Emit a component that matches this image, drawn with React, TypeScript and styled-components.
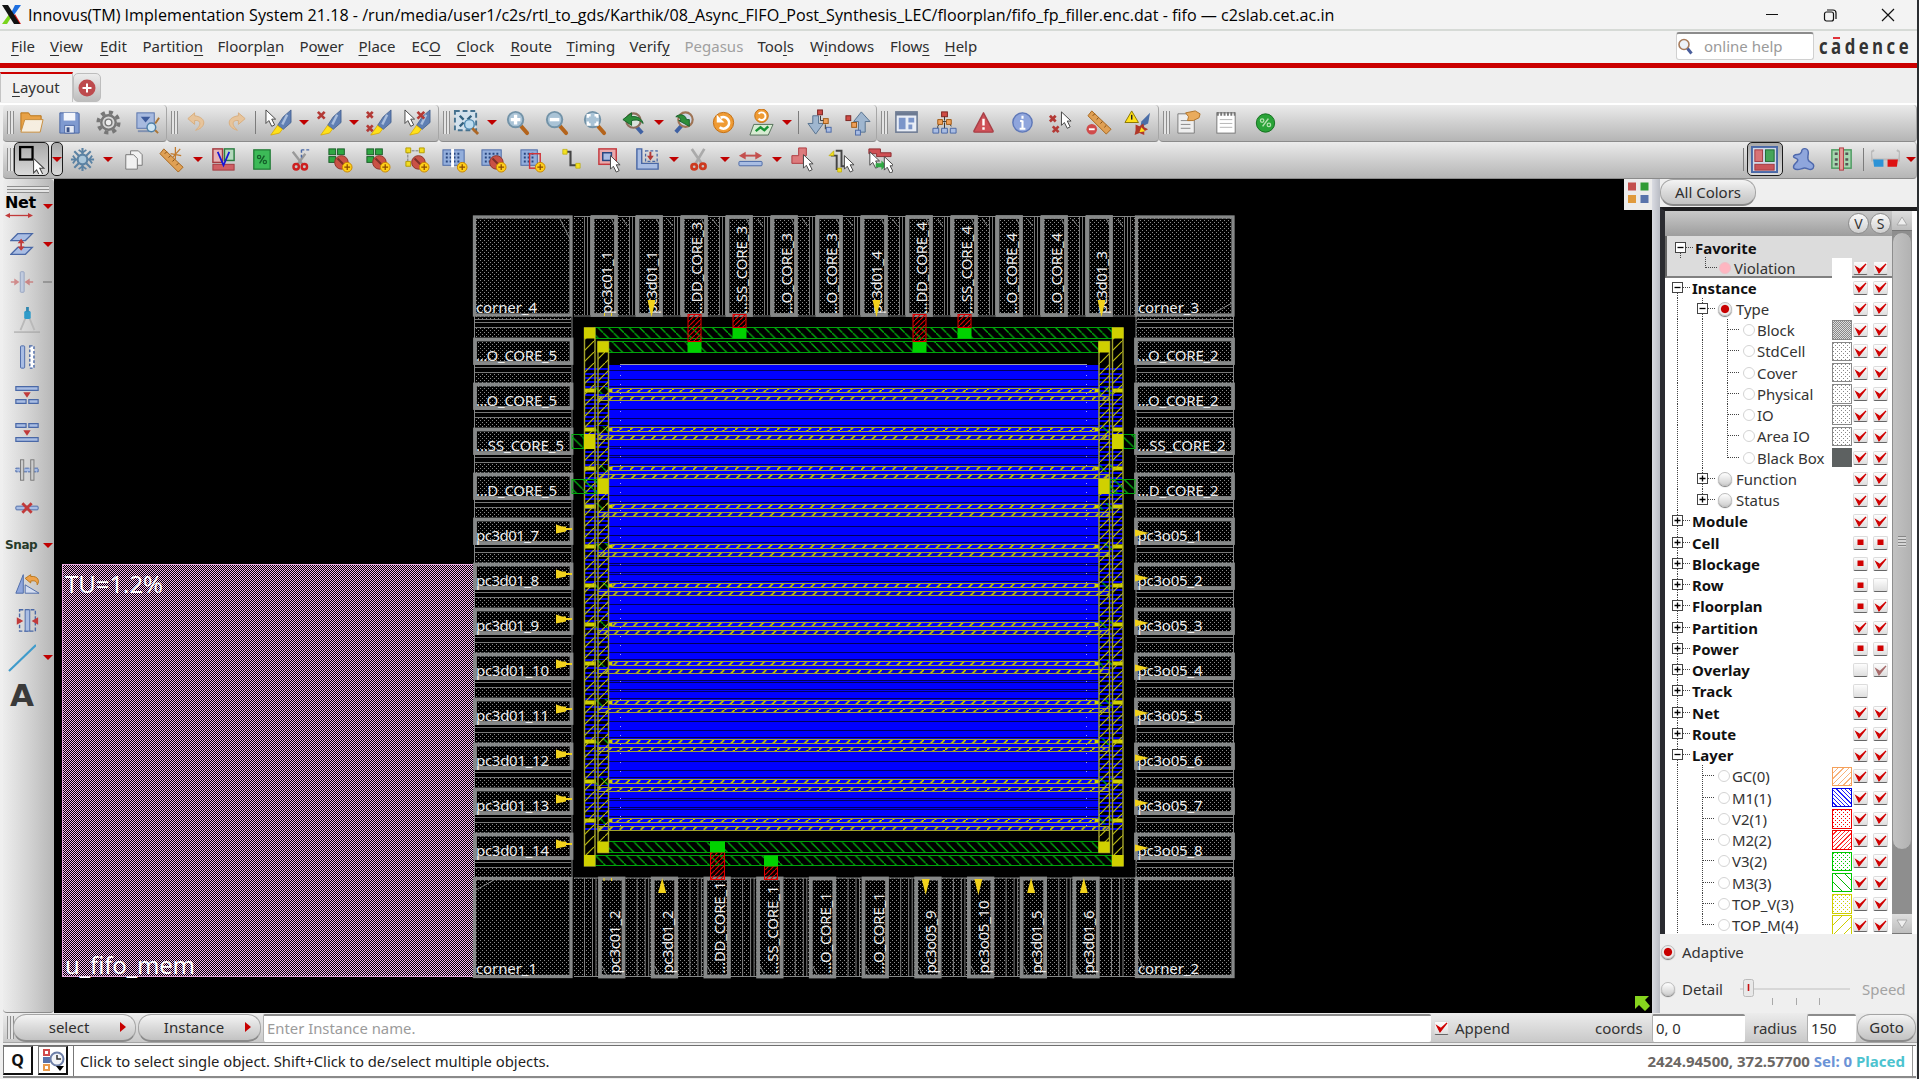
import React from "react";
import styled, { createGlobalStyle, css } from "styled-components";

const Global = createGlobalStyle`
  * { box-sizing: border-box; }
  html, body { margin: 0; padding: 0; background: #efefef; overflow: hidden; }
  body { font-family: "Noto Sans", "Open Sans", sans-serif; font-size: 15px; color: #333; }
  svg { display: block; }
`;

/* ---------- frame ---------- */

const Window = styled.div`
  width: 1919px;
  height: 1079px;
  display: flex;
  flex-direction: column;
  background: #efefef;
  border-right: 2px solid #2b2e31;
  overflow: hidden;
  white-space: nowrap;
`;

const TitleBar = styled.header`
  height: 31px;
  flex: none;
  display: flex;
  align-items: center;
  padding: 0 22px 0 2px;
  background: #f3f3f3;
  border-bottom: 2px solid #d6dad6;
`;

const TitleText = styled.div`
  margin-left: 7px;
  font: 16.12px "Open Sans", "Noto Sans", sans-serif;
  color: #000;
  flex: 1;
`;

const WindowControls = styled.div`
  display: flex;
  gap: 44px;
`;

const MenuBar = styled.nav`
  height: 32px;
  flex: none;
  display: flex;
  align-items: center;
  padding: 0 0 3px 11px;
  background: #f3f3f3;
`;

const MenuItem = styled.div<{ $w: number; $off?: boolean }>`
  width: ${(p) => p.$w}px;
  font-size: 15px;
  color: ${(p) => (p.$off ? "#a0a0a0" : "#2e2e2e")};
  u { text-underline-offset: 3px; text-decoration-thickness: 1.3px; }
`;

const HelpBox = styled.div`
  margin-left: auto;
  width: 138px;
  height: 28px;
  display: flex;
  align-items: center;
  gap: 11px;
  background: #fff;
  border: 1px solid #d0d0d0;
  border-top: 2px solid #8c8c8c;
  border-radius: 3px;
  color: #9a9a9a;
  font-size: 15px;
`;

const Logo = styled.div`
  width: 103px;
  padding-left: 5px;
`;

const RedRule = styled.div`
  height: 5px;
  flex: none;
  background: #cb0000;
`;

const TabRow = styled.div`
  height: 37px;
  flex: none;
  display: flex;
  align-items: flex-end;
  padding-bottom: 1px;
  border-bottom: 2px solid #fff;
`;

const Tab = styled.div`
  width: 73px;
  height: 30px;
  border-top: 2px solid #cb0000;
  border-right: 1px solid #c4c4c4;
  border-left: 1px solid #c4c4c4;
  background: #f1f1f1;
  padding: 3px 0 0 11px;
  font-size: 15px;
  u { text-underline-offset: 3px; }
`;

const AddTab = styled.div`
  width: 28px;
  height: 29px;
  display: flex;
  align-items: center;
  justify-content: center;
  border: 1px solid #bdbdbd;
  border-radius: 5px;
  background: linear-gradient(#ececec, #bdbdbd);
`;

/* ---------- toolbars ---------- */

const ToolBar = styled.div`
  height: 37px;
  flex: none;
  display: flex;
  padding-left: 3px;
`;

const ToolGroup = styled.div<{ $w?: number }>`
  ${(p) => (p.$w ? css`width: ${p.$w}px; flex: none;` : css`flex: 1;`)}
  display: flex;
  align-items: center;
  padding: 0 0 2px 4px;
  border-radius: 4px;
  background: linear-gradient(#ebebeb, #d2d2d2 45%, #b5b5b5);
  border-bottom: 1px solid #8b8b8b;
  border-right: 1px solid #a6a6a6;
`;

const Grip = styled.div<{ $gap?: number }>`
  width: 7px;
  height: 23px;
  flex: none;
  margin-right: ${(p) => p.$gap ?? 0}px;
  background: repeating-linear-gradient(90deg, #8e8e8e 0 1px, #e4e4e4 1px 3px);
`;

const SideGrip = styled.div`
  width: 42px;
  height: 7px;
  margin: 7px 0 -5px 4px;
  background: repeating-linear-gradient(#8e8e8e 0 1px, #e4e4e4 1px 3px);
`;

const Slot = styled.div<{ $w: number }>`
  width: ${(p) => p.$w}px;
  flex: none;
  display: flex;
  align-items: center;
  justify-content: center;
`;

const Divider = styled.div<{ $l?: number; $r?: number }>`
  width: 1px;
  height: 23px;
  flex: none;
  background: #7c7c7c;
  margin: 0 ${(p) => p.$r ?? 3}px 0 ${(p) => p.$l ?? 0}px;
`;

const Pressed = styled.div<{ $w: number; $gap?: number }>`
  width: ${(p) => p.$w}px;
  height: 34px;
  flex: none;
  display: flex;
  align-items: center;
  justify-content: center;
  border: 1.5px solid #1c1c1c;
  border-radius: 5px;
  background: linear-gradient(#a9a9a9, #dadada);
  margin-right: ${(p) => p.$gap ?? 2}px;
`;

const Push = styled.div`
  margin-left: auto;
  display: flex;
  align-items: center;
`;

const Down = styled.div`
  width: 0;
  height: 0;
  border: 5px solid transparent;
  border-top: 5.5px solid #c00000;
  border-bottom: 0;
`;

const RightTri = styled.div`
  width: 0;
  height: 0;
  margin-right: 5px;
  border: 5px solid transparent;
  border-left: 6px solid #c80000;
  border-right: 0;
`;

const Body = styled.div`
  height: 834px;
  flex: none;
  display: flex;
`;

const SideBar = styled.div`
  width: 51px;
  margin-left: 3px;
  flex: none;
  background: linear-gradient(90deg, #ededed, #d3d3d3 50%, #b6b6b6);
  border-radius: 4px;
  border-bottom: 1px solid #8b8b8b;
`;

const SideItem = styled.div<{ $drop?: boolean }>`
  height: 37.6px;
  display: flex;
  align-items: center;
  padding-left: ${(p) => (p.$drop ? 2 : 7)}px;
  gap: 5px;
`;

const SideWord = styled.div<{ $size: number; $color: string }>`
  width: 33px;
  font: 700 ${(p) => p.$size}px/1 "DejaVu Sans", "Noto Sans", sans-serif;
  letter-spacing: -0.4px;
  color: ${(p) => p.$color};
`;

const NetStack = styled.div`
  display: flex;
  flex-direction: column;
  gap: 1px;
`;

const Canvas = styled.div`
  width: 1598px;
  flex: none;
  background: #000;
`;

/* ---------- colour panel ---------- */

const Splitter = styled.div`
  width: 8px;
  flex: none;
  background: linear-gradient(90deg, #d9dbe2, #b9bcc4);
`;

const Panel = styled.aside`
  flex: 1;
  display: flex;
  flex-direction: column;
`;

const Pill = styled.div<{ $w: number; $h: number }>`
  width: ${(p) => p.$w}px;
  height: ${(p) => p.$h}px;
  flex: none;
  display: flex;
  align-items: center;
  justify-content: center;
  border: 1px solid #a4a4a4;
  border-bottom: 2px solid #8a8a8a;
  border-radius: 13px;
  background: linear-gradient(#f4f4f4, #dadada 50%, #c3c3c3);
  font-size: 15px;
  color: #2e2e2e;
`;

const TreeFrame = styled.div`
  height: 727px;
  margin-top: 1px;
  flex: none;
  display: flex;
  border-top: 4px solid #1d1d1f;
  border-left: 5px solid #2a2b30;
  background: #fff;
`;

const TreeBody = styled.div`
  width: 227px;
  height: 723px;
  overflow: hidden;
`;

const TreeHead = styled.div`
  height: 25px;
  display: flex;
  justify-content: flex-end;
  align-items: center;
  gap: 1px;
  padding-right: 1px;
  background: linear-gradient(#c9c9c9, #9d9d9d);
`;

const HeadDot = styled.div`
  width: 21px;
  height: 21px;
  border-radius: 50%;
  border: 1px solid #8c8c8c;
  background: linear-gradient(#fafafa, #cfcfcf);
  display: flex;
  align-items: center;
  justify-content: center;
  font-size: 14px;
`;

const Favorites = styled.div`
  height: 42px;
  margin-bottom: -1px;
  padding-left: 1px;
  background: #dcdcdc;
  border-left: 2px solid #666;
  border-bottom: 2px solid #808080;
`;

const Row = styled.div<{ $h?: number }>`
  height: ${(p) => p.$h ?? 21.25}px;
  display: flex;
  align-items: center;
  padding-right: 4px;
`;

const RowName = styled.div<{ $bold?: boolean; $pad?: number }>`
  flex: 1;
  padding-left: ${(p) => p.$pad ?? 2}px;
  font-size: 14.95px;
  line-height: 20px;
  font-weight: ${(p) => (p.$bold ? 700 : 400)};
  color: ${(p) => (p.$bold ? "#111" : "#333")};
`;

const Radio = styled.div<{ $size: number; $kind: "on" | "off" | "faint" | "pink" }>`
  width: ${(p) => p.$size}px;
  height: ${(p) => p.$size}px;
  flex: none;
  border-radius: 50%;
  ${(p) =>
    p.$kind === "faint"
      ? css`border: 1px solid #d4d4d4; background: #fff;`
      : p.$kind === "pink"
      ? css`background: #ffb6c1; border: 1px solid #eec0c8;`
      : css`
          border: 1px solid #bcbcbc;
          box-shadow: 0 1px 1px #777;
          background: ${p.$kind === "on"
            ? "radial-gradient(circle, #c80000 0 3.6px, #eee 4.6px)"
            : "linear-gradient(#fff, #cfcfcf)"};
        `}
`;

const Swatch = styled.div<{ $line: string; $fill: string }>`
  width: 20px;
  height: 19.5px;
  flex: none;
  border: 1px solid ${(p) => p.$line};
  background: ${(p) => p.$fill};
`;

const CheckBox = styled.div<{ $gap?: number }>`
  width: 15px;
  height: 14px;
  flex: none;
  margin-left: ${(p) => p.$gap ?? 0}px;
  display: flex;
  align-items: center;
  justify-content: center;
  background: linear-gradient(#fdfdfd, #dedede);
  border: 1px solid #dcdcdc;
  border-bottom: 1.5px solid #666;
  border-radius: 2px;
`;

const NoBox = styled.div`
  width: 20px;
`;

const ScrollBar = styled.div`
  width: 20px;
  height: 723px;
  display: flex;
  flex-direction: column;
  background: #8e8e8e;
`;

const ScrollButton = styled.div`
  height: 20px;
  flex: none;
  display: flex;
  align-items: center;
  justify-content: center;
  background: linear-gradient(#dedede, #bdbdbd);
  border-bottom: 1px solid #777;
`;

const ScrollThumb = styled.div`
  height: 618px;
  flex: none;
  margin-top: 1px;
  margin-bottom: auto;
  border-radius: 10px;
  background: linear-gradient(90deg, #c2c2c2, #b2b2b2);
  border: 1px solid #8d8d8d;
  display: flex;
  align-items: center;
  justify-content: center;
`;

const ThumbGrip = styled.div`
  width: 8px;
  height: 11px;
  background: repeating-linear-gradient(#858585 0 1px, #d5d5d5 1px 3px);
`;

const OptionRow = styled.div<{ $h: number }>`
  height: ${(p) => p.$h}px;
  display: flex;
  align-items: center;
  gap: 7px;
  padding-left: 1px;
`;

const Muted = styled.span`
  color: #a3a3a3;
`;

/* ---------- bottom bars ---------- */

const QueryBar = styled.div`
  height: 30px;
  flex: none;
  margin-left: 3px;
  display: flex;
  align-items: center;
  padding-left: 4px;
  background: linear-gradient(#ececec, #c9c9c9);
  border-bottom: 1px solid #a5a5a5;
`;

const PillText = styled.span<{ $w: number }>`
  width: ${(p) => p.$w}px;
  text-align: center;
`;

const Field = styled.div<{ $w: number; $hint?: boolean }>`
  width: ${(p) => p.$w}px;
  height: 28px;
  flex: none;
  background: #fff;
  border-top: 2px solid #8c8c8c;
  border-left: 1px solid #b0b0b0;
  border-radius: 2px;
  padding-left: 3px;
  font-size: 14.85px;
  line-height: 25px;
  color: ${(p) => (p.$hint ? "#9b9b9b" : "#2e2e2e")};
`;

const Label = styled.div<{ $w: number; $pad: number }>`
  width: ${(p) => p.$w}px;
  padding-left: ${(p) => p.$pad}px;
  flex: none;
  color: #333;
`;

const StatusBar = styled.footer`
  flex: 1;
  margin: 2px 1px 1px 3px;
  display: flex;
  background: #fff;
  border-top: 1px solid #6f6f6f;
  border-bottom: 2px solid #8a8a8a;
`;

const StatusButton = styled.div`
  width: 30px;
  height: 29px;
  margin-right: 5px;
  display: flex;
  align-items: center;
  justify-content: center;
  border: 1px solid #777;
  border-right: 2px solid #111;
  border-bottom: 2px solid #111;
  font-size: 16px;
  font-weight: 700;
  color: #111;
`;

const Message = styled.div`
  flex: 1;
  border-left: 1px solid #777;
  padding: 5px 0 0 6px;
  font-size: 14.82px;
  color: #222;
`;

const Readout = styled.div`
  padding: 5px 7px 0 0;
  border-right: 1px solid #999;
  margin-right: 3px;
  font-size: 15px;
  font-weight: 700;
  color: #6b6764;
`;

const Tint = styled.span<{ $c: string }>`
  color: ${(p) => p.$c};
`;

/* ---------- icon parts ---------- */

const Cursor = ({ x = 0, y = 0 }) => (
  <path transform={`translate(${x} ${y})`} d="M0 0v14l3-3 3 6 3-1.5-3-6h4z" fill="#fff" stroke="#444" strokeWidth="1" />
);
const Brush = () => (
  <g>
    <path d="M27 1v13l-8 7-6-4 6-9z" fill="#5f7fb3" stroke="#3f5b8a" strokeWidth=".8" />
    <path d="M23 6l-5 10" stroke="#a9bedd" strokeWidth="2.500" />
    <path d="M13 17l5 4-3 4-9 2z" fill="#ffe11a" stroke="#d8a900" strokeWidth=".8" />
  </g>
);
const Cross = ({ x = 0, y = 0, s = 7 }) => (
  <path d={`M${x} ${y}l${s} ${s}M${x + s} ${y}l${-s} ${s}`} stroke="#b33a36" strokeWidth="2.8" />
);
const Lens = ({ children }: { children?: React.ReactNode }) => (
  <g>
    <path d="M17 17l7 8" stroke="#b4641c" strokeWidth="4" strokeLinecap="round" />
    <circle cx="12" cy="11" r="8" fill="#a9c3d6" stroke="#7393a8" strokeWidth="2" />
    {children}
  </g>
);
const Plus = () => (
  <g>
    <circle cx="22" cy="22" r="5" fill="#ffcf1a" stroke="#c98700" />
    <path d="M22 19v6M19 22h6" stroke="#8b4a00" strokeWidth="1.3" />
  </g>
);
const Ban = ({ x = 16, y = 17 }) => (
  <g>
    <circle cx={x} cy={y} r="7" fill="#c95145" stroke="#8e352c" />
    <path d={`M${x - 4} ${y - 4}l8 8`} stroke="#7c2f28" strokeWidth="2" />
  </g>
);
const Tiles = ({ c = "#2fa843" }) => (
  <g fill={c} stroke="#1c5e2a" strokeWidth="1">
    <rect x="3" y="3" width="7" height="6" /><rect x="12" y="3" width="7" height="6" />
    <rect x="3" y="11" width="7" height="6" />
  </g>
);
const Grid = ({ w = 20 }) => (
  <g>
    <rect x="2" y="4" width={w} height="16" fill="#93aedb" stroke="#4a68a6" />
    <path d={`M5 8h${w - 6}M5 12h${w - 6}M5 16h${w - 6}`} stroke="#27457f" strokeWidth="2" strokeDasharray="2 2" />
  </g>
);

const S = "#4a68a6";
const F = "#a9bde3";

const glyphs: Record<string, React.ReactNode> = {
  folder: <g><path d="M3 22V4h8l2 3h11v4" fill="#e8a247" stroke="#b97417" /><path d="M3 24l4-13h19l-3 13z" fill="#f6eee0" stroke="#c78b3b" /></g>,
  save: <g><path d="M4 4h19l1 1v20H4z" fill="#7f9ad0" stroke="#4c68a4" /><path d="M8 4h12v8H8z" fill="#f4f6fb" /><path d="M9 17h10v8H9z" fill="#e4e9f4" stroke="#4c68a4" /><path d="M11 19h3v5h-3z" fill="#3a5288" /></g>,
  gear: <g><circle cx="14" cy="14" r="10.5" fill="none" stroke="#777" strokeWidth="4" strokeDasharray="4.2 4.05" /><circle cx="14" cy="14" r="7.5" fill="#d7d7d7" stroke="#777" strokeWidth="2.5" /><circle cx="14" cy="14" r="3.5" fill="#eee" stroke="#777" strokeWidth="1.5" /></g>,
  listMag: <g><rect x="3" y="4" width="18" height="16" fill="#a7badf" stroke="#5873ab" /><path d="M7 8h10l-5 6z" fill="#3c5a9b" /><path d="M4 23h12" stroke="#8090b0" strokeWidth="2" /><circle cx="18" cy="19" r="4.5" fill="#cfe6f4" stroke="#4f80a8" strokeWidth="1.5" /><path d="M22 22l3 3M22 15l4-6" stroke="#ab7637" strokeWidth="2" /></g>,
  undo: <path d="M11 4l-7 6 7 6v-4c6-1 8 4 1 10 10-2 13-13-1-15z" fill="#e7c49b" stroke="#d9ae7e" />,
  redo: <path d="M17 4l7 6-7 6v-4c-6-1-8 4-1 10-10-2-13-13 1-15z" fill="#e7c49b" stroke="#d9ae7e" />,
  curBrush: <g><Brush /><Cursor x={1} y={1} /></g>,
  xBrush: <g><Brush /><Cross x={3} y={3} /></g>,
  xxBrush: <g><Brush /><Cross x={2} y={3} s={6} /><Cross x={2} y={17} s={6} /></g>,
  curXBrush: <g><Brush /><Cross x={14} y={3} /><Cursor x={1} y={1} /></g>,
  zoomArea: <g><rect x="2" y="2" width="22" height="20" fill="#d3e1ec" stroke="#45718f" strokeWidth="2" strokeDasharray="5 3" /><path d="M7 7l4 4M19 7l-4 4M7 18l4-4" stroke="#34627f" strokeWidth="2.5" /><circle cx="17" cy="16" r="5" fill="#bcdcf0" stroke="#4b87ae" strokeWidth="1.5" /><path d="M20 20l6 6" stroke="#ad6726" strokeWidth="3" /></g>,
  zoomIn: <Lens><path d="M12 6v10M7 11h10" stroke="#fff" strokeWidth="3.5" /></Lens>,
  zoomOut: <Lens><path d="M7 11h10" stroke="#fff" strokeWidth="3.5" /></Lens>,
  zoomFit: <Lens><path d="M7 9V6.500h3M14 6.500h3V9M17 13v3h-3M10 16H7v-3" stroke="#fff" strokeWidth="2.500" fill="none" /></Lens>,
  zoomPrev: <g><path d="M15 16l8 9" stroke="#3f61a3" strokeWidth="4" /><circle cx="14" cy="12" r="7.500" fill="#dbe4dd" stroke="#8e6e5d" strokeWidth="2.200" /><path d="M3 11l9-7v4c7-1 11 3 12 7-4-4-7-4-12-3v5z" fill="#2e8f3a" stroke="#17602a" /></g>,
  zoomNext: <g><path d="M12 16l-7 8" stroke="#3f61a3" strokeWidth="4" /><circle cx="15" cy="11" r="7.500" fill="#cfd8e4" stroke="#9f7455" strokeWidth="2.200" /><path d="M19 18v-7h-3c-1-6-8-6-11-3 4 0 5 2 5 4H8z" fill="#2e8f3a" stroke="#17602a" /></g>,
  refresh: <g><circle cx="14" cy="14" r="10.500" fill="#ef9b34" stroke="#c26c10" /><path d="M11 9a6 6 0 1 1-1 10" stroke="#fff" strokeWidth="2.800" fill="none" /><path d="M7 6v8h8z" fill="#fff" /></g>,
  refreshMap: <g><path d="M6 16h20l-5 11H2z" fill="#d8ecd3" stroke="#55735a" /><path d="M8 23l5-4 4 3 4-4" stroke="#189334" strokeWidth="2.500" fill="none" /><circle cx="14" cy="7" r="7" fill="#ef9b34" stroke="#c26c10" /><path d="M11 5a4 4 0 1 1 0 5" stroke="#fff" strokeWidth="2" fill="none" /></g>,
  pushDown: <g><path d="M6 7h6v8h5L9 26 1 15h5z" fill="#9fb6cf" stroke="#56718f" /><rect x="11" y="1" width="5" height="5" fill="#cf4b45" stroke="#7d2420" /><rect x="17" y="10" width="5" height="5" fill="#eea05a" stroke="#a05a14" /><rect x="20" y="19" width="5" height="5" fill="#a9bde3" stroke={S} /><path d="M14 7v5h3M19 16v5" stroke="#333" fill="none" /></g>,
  pushUp: <g><path d="M15 24V13h-5L18 3l9 10h-5v11z" fill="#9fb6cf" stroke="#56718f" /><rect x="2" y="7" width="5" height="5" fill="#cf4b45" stroke="#7d2420" /><rect x="8" y="14" width="5" height="5" fill="#eea05a" stroke="#a05a14" /><rect x="12" y="22" width="5" height="5" fill="#a9bde3" stroke={S} /></g>,
  layout: <g><rect x="3" y="3" width="22" height="21" fill="#e8edf6" stroke="#6c7a92" strokeWidth="1.600" /><path d="M3 5h22" stroke="#6c7a92" strokeWidth="3.500" /><path d="M6 9h7v12H6zM16 9h6v5h-6zM16 16h4v5h-4z" fill="#7b95c9" /></g>,
  tree: <g><path d="M14 7v5M7 18l3-5h8l3 5M7 18v3M14 14v7" stroke="#333" fill="none" /><rect x="11" y="3" width="6" height="5" fill="#cf4b45" stroke="#7d2420" /><path d="M7 11h5v5H7zM16 11h5v5h-5z" fill="#eea05a" stroke="#a05a14" /><path d="M2 20h6v5H2zM11 20h6v5h-6zM20 20h6v5h-6z" fill={F} stroke={S} /></g>,
  warn: <g><path d="M14 4l10 19q0 1-1 1H5q-1 0-1-1z" fill="#cf5158" stroke="#a84148" strokeWidth="1.500" strokeLinejoin="round" /><path d="M14 10v7M14 19v2.500" stroke="#fff" strokeWidth="2.500" /></g>,
  info: <g><circle cx="14" cy="14" r="10" fill="#8fa5dc" stroke="#5f78b8" strokeWidth="1.500" /><path d="M14 7v3M14 12v8M11.500 12.500h2.500M11 20.500h6" stroke="#fff" strokeWidth="2.200" /></g>,
  xxCursor: <g><Cross x={3} y={7} s={6} /><Cross x={6} y={18} s={6} /><Cursor x={15} y={3} /></g>,
  rulerDel: <g><path d="M6 2l20 19-5 5L2 7z" fill="#dfa055" stroke="#a8661c" /><path d="M9 5l-2 2M13 9l-2 2M17 13l-2 2M21 17l-2 2" stroke="#7b4710" /><circle cx="6" cy="21" r="5.500" fill="#d04b4b" /><path d="M3 21h6" stroke="#fff" strokeWidth="2" /></g>,
  warnBrush: <g><path d="M27 4l-2 11-8 4 1-6z" fill="#4b6ea8" /><path d="M8 2l7 12H1z" fill="#ffe11a" stroke="#8a7600" /><path d="M8 6v5" stroke="#222" strokeWidth="1.500" /><path d="M12 16l4 2 4-3 1 4 4 2-4 2v4l-5-2-5 2 1-5z" fill="#b0382a" /><path d="M18 19l4 4-6 1z" fill="#ffe11a" /></g>,
  note: <g><path d="M3 5h17v20H3z" fill="#eee" stroke="#7c7c7c" /><path d="M6 12h10M6 16h10M6 20h10" stroke="#888" /><path d="M11 4l10-2 5 3-1 4-6 3h-6l1-4z" fill="#e9ab5c" stroke="#b1752b" /></g>,
  pad: <g><rect x="4" y="4" width="19" height="21" fill="#fff" stroke="#777" /><path d="M4 5h19" stroke="#777" strokeWidth="4" strokeDasharray="2 1.500" /><path d="M7 11h13M7 15h13M7 19h13" stroke="#b5b5b5" /></g>,
  percent: <g><circle cx="14" cy="14.500" r="9.500" fill="#2aa338" stroke="#14701f" /><path d="M11 18l6-8" stroke="#b4e0ae" strokeWidth="1.600" /><circle cx="10.500" cy="12" r="1.800" fill="none" stroke="#b4e0ae" strokeWidth="1.300" /><circle cx="17.500" cy="16.500" r="1.800" fill="none" stroke="#b4e0ae" strokeWidth="1.300" /></g>,
  select: <g><rect x="3" y="2" width="12" height="12" fill="none" stroke="#000" strokeWidth="2.200" /><Cursor x={16} y={13} /></g>,
  snow: <g stroke="#5b82a3" strokeWidth="2.200" fill="none"><path d="M14 2v24M2 14h24M5.500 5.500l17 17M22.500 5.500l-17 17" /><circle cx="14" cy="14" r="5" fill="#a9c6da" /><path d="M10 4l4 3 4-3M10 24l4-3 4 3M4 10l3 4-3 4M24 10l-3 4 3 4" strokeWidth="1.800" /></g>,
  copy: <g fill="#f1f1f1" stroke="#777"><path d="M11 5h8l4 4v11H11z" /><path d="M6 9h8l4 4v11H6z" /></g>,
  ruler: <g><path d="M5 3l20 19-5 5L1 8z" fill="#dfa055" stroke="#a8661c" /><path d="M8 6l-2 2M12 10l-2 2M16 14l-2 2M20 18l-2 2" stroke="#7b4710" /><path d="M17 1v13M12 8l11 2M22 3l-8 9" stroke="#c27b2e" strokeWidth="1.300" /></g>,
  vMap: <g><rect x="3" y="3" width="10" height="14" fill="#e7b3b5" stroke="#a33a40" strokeWidth="1.500" /><rect x="15" y="3" width="10" height="12" fill="#b5d8bd" stroke="#2b7d40" strokeWidth="1.500" /><rect x="3" y="19" width="22" height="6" fill="#cf5f64" stroke="#a33a40" /><path d="M8 6l6 14 6-14" stroke="#1717d8" strokeWidth="1.800" fill="none" /></g>,
  pctPage: <g><rect x="6" y="4" width="17" height="20" fill="#3cba57" stroke="#1f7a34" strokeWidth="1.300" /><path d="M12 18l5-8" stroke="#14602a" strokeWidth="1.500" /><circle cx="11.500" cy="11.500" r="1.700" fill="none" stroke="#14602a" strokeWidth="1.300" /><circle cx="17.500" cy="16.500" r="1.700" fill="none" stroke="#14602a" strokeWidth="1.300" /></g>,
  cutBlue: <g><path d="M6 6l10 13M19 8l-8 11" stroke="#999" strokeWidth="2.500" /><path d="M15 4h9M15 4v8" stroke={S} strokeWidth="1.500" strokeDasharray="3 2" /><circle cx="9.500" cy="21.500" r="2.800" fill="none" stroke="#cd1f1f" strokeWidth="2.500" /><circle cx="18" cy="21.500" r="2.800" fill="none" stroke="#cd1f1f" strokeWidth="2.500" /></g>,
  tilesBan: <g><Tiles /><Ban /><Plus /></g>,
  nodesBan: <g><path d="M5 5h15M5 5v13" stroke="#777" strokeDasharray="3 1" /><path d="M3 2h5v5H3zM17 2h5v5h-5zM3 16h5v5H3z" fill="#f2dc22" stroke="#b39c00" /><Ban /><Plus /></g>,
  gridPlus: <g><Grid w={22} /><path d="M12 3v19" stroke="#fff" strokeWidth="3" /><Plus /></g>,
  gridBan: <g><Grid w={20} /><Ban x={17} /><Plus /></g>,
  gridRed: <g><Grid w={17} /><rect x="11" y="8" width="11" height="15" fill="none" stroke="#d0343a" strokeWidth="1.500" /><Plus /></g>,
  wire: <g><path d="M9 6h5v14h6" stroke="#444" strokeWidth="2.200" fill="none" /><path d="M6 3.500h4.500v5H6zM19.500 18h4.500v5h-4.500z" fill="#f2e022" stroke="#bba800" strokeWidth=".7" /></g>,
  pickRed: <g><rect x="3" y="3" width="18" height="16" fill="#e9a9ab" stroke="#c4393e" strokeWidth="1.500" /><rect x="7" y="7" width="9" height="8" fill={F} stroke="#27457f" strokeWidth="1.500" /><Cursor x={15} y={10} /></g>,
  lshape: <g><path d="M3 3h5v15h17v6H3z" fill={F} stroke={S} strokeWidth="1.500" /><path d="M12 5h12v11H12z" stroke={S} strokeWidth="1.300" strokeDasharray="3 2" fill="none" /><path d="M17 6v6" stroke="#b33a36" strokeWidth="2" /><path d="M13.500 10h7l-3.500 5z" fill="#b33a36" /></g>,
  cut: <g><path d="M6 3l10 15M19 3L10 18" stroke="#aaa" strokeWidth="2.800" /><circle cx="8.500" cy="21.500" r="2.800" fill="none" stroke="#cd3a1f" strokeWidth="2.800" /><circle cx="17.500" cy="21" r="2.800" fill="none" stroke="#cd3a1f" strokeWidth="2.800" /></g>,
  stretch: <g><path d="M6 10h16" stroke="#c4504e" strokeWidth="2" /><path d="M2 10l7-4v8zM26 10l-7-4v8z" fill="#c4504e" /><rect x="2" y="16" width="24" height="4.500" fill={F} stroke={S} rx="1" /></g>,
  addPoly: <g><path d="M10 2h8v8h-3v8H3V10h7z" fill="#dc7b7d" stroke="#b03a3f" /><Cursor x={15} y={9} /></g>,
  wireCur: <g><path d="M3 10h6v14h5M8 5h6v16h6" stroke="#444" strokeWidth="2" fill="none" /><path d="M1 10l5-5v5zM10 23h4v4h-4z" fill="#f2e022" stroke="#bba800" strokeWidth=".7" /><Cursor x={17} y={10} /></g>,
  moveCur: <g><path d="M3 3h12v4h11v4H11V8H3z" fill="#cf5054" stroke="#8f2d31" /><Cursor x={4} y={6} /><path d="M10 18h6v-3l5 5-5 5v-3h-6z" fill="#2fa843" /><Cursor x={19} y={11} /></g>,
  floorView: <g><rect x="1" y="1" width="26" height="26" fill="#cfd8e8" stroke={S} strokeWidth="2" /><rect x="4" y="4" width="8" height="12" fill="#d87377" stroke="#a33a40" /><rect x="15" y="4" width="9" height="12" fill="#46a55a" stroke="#1f6b32" /><rect x="4" y="19" width="20" height="6" fill="#c8555a" stroke="#a33a40" /></g>,
  amoeba: <path d="M12 6c0-5 7-4 7 1 0 4-2 6 1 9 3 2 6 3 4 7-3 4-6-1-10 0s-7 3-10 0c-2-4 3-5 4-8s-6-2-4-5c3-3 6 1 8-4z" fill="#8fa6dc" stroke="#4e68ac" strokeWidth="1.500" />,
  physView: <g><rect x="4" y="4" width="20" height="19" fill="#a7d6b0" stroke="#4c9a60" strokeWidth="1.500" /><path d="M7 8h3M7 14h3M7 19h3M18 8h3M18 14h3M18 19h3" stroke="#555" strokeWidth="2.500" /><rect x="12" y="2" width="4" height="23" fill="#e79a9b" stroke="#b03a40" /></g>,
  glasses: <g><path d="M1 16l-1-9 3-2M27 16l1-9-3-2M1 14h26" stroke="#bbb" strokeWidth="2" fill="none" /><path d="M2 14h10v7H3z" fill="#2d93d6" /><path d="M16 14h10l-1 7h-9z" fill="#dd1212" /></g>,
  layers: <g><path d="M9 2h17l-8 8H1zM9 18h17l-8 8H1z" fill={F} stroke={S} strokeWidth="1.500" /><path d="M13 9v11" stroke="#c13a3a" strokeWidth="2" /><path d="M9 13l4-5 4 5zM9 17l4 5 4-5z" fill="#c13a3a" /></g>,
  squeeze: <g opacity=".5"><rect x="12" y="2" width="4.500" height="24" fill={F} stroke={S} rx="1" /><path d="M1 14h6M27 14h-6" stroke="#c13a3a" strokeWidth="2" /><path d="M5 10l6 4-6 4zM23 10l-6 4 6 4z" fill="#c13a3a" /></g>,
  compass: <g><path d="M14 8L7 25M15 8l7 17" stroke="#b9b9b9" strokeWidth="2" /><path d="M0 27h28" stroke="#999" /><rect x="11" y="4" width="7" height="9" fill="#2f9bc9" rx="2" /><path d="M14.500 0v5" stroke="#2f87b0" strokeWidth="3" /></g>,
  bars: <g><rect x="7" y="2" width="4.500" height="24" fill={F} stroke={S} rx="1" /><rect x="17" y="2" width="4.500" height="24" fill="#fff" stroke={S} strokeWidth="1.500" strokeDasharray="3 2" /></g>,
  mergeDn: <g><path d="M2 5h24v4H2zM2 19h11v4H2zM16 19h10v4H16z" fill={F} stroke={S} strokeWidth="1.300" /><path d="M10 11h8l-4 6z" fill="#c13a3a" /></g>,
  mergeUp: <g><path d="M2 20h24v4H2zM2 5h11v4H2zM16 5h10v4H16z" fill={F} stroke={S} strokeWidth="1.300" /><path d="M10 12h8l-4 6z" fill="#c13a3a" /></g>,
  cross: <g><path d="M2 12h24v4H2z" fill={F} stroke={S} strokeDasharray="4 1" /><rect x="7" y="3" width="3.500" height="22" fill="#ccc" stroke="#777" /><rect x="18" y="3" width="3.500" height="22" fill="#ccc" stroke="#777" /></g>,
  wireDel: <g><rect x="2" y="12" width="24" height="4" fill={F} stroke={S} rx="1" /><path d="M9 9l10 10M19 9L9 19" stroke="#c13a3a" strokeWidth="3" /></g>,
  flip: <g><path d="M10 5v20H2z" fill="#8fa6dc" stroke={S} /><path d="M12 16v9h15z" fill="#d5def1" stroke={S} /><path d="M12 9l6-4v2c8-1 10 5 7 9 0-4-3-5-7-4v2z" fill="#eea24a" stroke="#b97417" /></g>,
  align: <g><rect x="6" y="3" width="17" height="23" fill="none" stroke={S} strokeWidth="1.500" strokeDasharray="4 2" /><rect x="12" y="3" width="5" height="23" fill={F} stroke={S} /><path d="M3 11l7 4-7 4zM26 11l-7 4 7 4z" fill="#c13a3a" /></g>,
  line: <path d="M1 27L28 1" stroke="#3f9bcb" strokeWidth="2.200" />,
};

const Icon = ({ n, s = 27 }: { n: string; s?: number }) => (
  <svg width={s} height={s} viewBox="0 0 28 28">{glyphs[n]}</svg>
);

const Tools = ({ items, drop = 11.6 }: { items: string[]; drop?: number }) => (
  <>
    {items.map((n, i) =>
      n === "v" ? <Slot key={i} $w={drop}><Down /></Slot>
        : n === "|" ? <Divider key={i} />
        : <Slot key={i} $w={38.6}><Icon n={n} /></Slot>
    )}
  </>
);

/* ---------- chip drawing ---------- */

const PadName = ({ t, x, y, w, up }: { t: string; x: number; y: number; w: number; up?: boolean }) => (
  <text x={x} y={y} textLength={w} fontSize="15" fill="#ececec" transform={up ? `rotate(-90 ${x} ${y})` : undefined}>{t}</text>
);

const nameWidth = (t: string) =>
  t.includes("DD_") ? 92 : t.includes("SS_") ? 88 : t.startsWith("...") ? 81 : t.length > 8 ? 73 : 63;

const topPads = ["pc3c01_1", "pc3d01_1", "...DD_CORE_3", "...SS_CORE_3", "...O_CORE_3", "...O_CORE_3", "pc3d01_4", "...DD_CORE_4", "...SS_CORE_4", "...O_CORE_4", "...O_CORE_4", "pc3d01_3"];
const bottomPads = ["pc3c01_2", "pc3d01_2", "...DD_CORE_1", "...SS_CORE_1", "...O_CORE_1", "...O_CORE_1", "pc3o05_9", "pc3o05_10", "pc3d01_5", "pc3d01_6"];
const leftPads = ["...O_CORE_5", "...O_CORE_5", "...SS_CORE_5", "...D_CORE_5", "pc3d01_7", "pc3d01_8", "pc3d01_9", "pc3d01_10", "pc3d01_11", "pc3d01_12", "pc3d01_13", "pc3d01_14"];
const rightPads = ["...O_CORE_2", "...O_CORE_2", "...SS_CORE_2", "...D_CORE_2", "pc3o05_1", "pc3o05_2", "pc3o05_3", "pc3o05_4", "pc3o05_5", "pc3o05_6", "pc3o05_7", "pc3o05_8"];
const straps = [388, 427, 466, 504, 544, 583, 622, 661, 700, 739, 779, 818];
const GR = "#868888";
const YE = "#d0d000";
const OL = "#a3a32c";

const Strap = ({ y }: { y: number }) => (
  <g>
    <rect x="596" y={y - 1} width="12" height="7" fill="#000" />
    <rect x="596" y={y - 1} width="12" height="7" fill="url(#grn)" />
    <rect x="1098" y={y - 1} width="14" height="7" fill="url(#grn)" />
    <rect x="612" y={y + 0.5} width="483" height="4" fill="#0000ff" />
    <rect x="612" y={y + 0.5} width="483" height="4" fill="url(#dash)" stroke={OL} />
    <rect x="598" y={y + 8.5} width="511" height="4" fill="#0000d0" />
    <rect x="598" y={y + 8.5} width="511" height="4" fill="url(#dash)" stroke={OL} />
    <path d={`M584 ${y + 2.5}h12M608 ${y + 2.5}h4M1095 ${y + 2.5}h4M1112 ${y + 2.5}h11`} stroke={YE} strokeWidth="4" />
  </g>
);

const Chip = () => (
  <svg width="1598" height="834" viewBox="54 179 1598 834" fontFamily="Noto Sans, sans-serif">
    <defs>
      <pattern id="mem" width="2" height="2" patternUnits="userSpaceOnUse">
        <path d="M0 0h1v1h-1zM1 1h1v1h-1z" fill="#f8b4ee" shapeRendering="crispEdges" />
      </pattern>
      <pattern id="dots" width="4" height="4" patternUnits="userSpaceOnUse">
        <path d="M0 0h1v1h-1zM2 2h1v1h-1z" fill="#8a8a8a" shapeRendering="crispEdges" />
      </pattern>
      <pattern id="grn" width="10.400" height="10.400" patternUnits="userSpaceOnUse">
        <path d="M-1 -1l12.400 12.400" stroke="#00b80c" strokeWidth="1.200" />
      </pattern>
      <pattern id="yel" width="11" height="11" patternUnits="userSpaceOnUse">
        <path d="M-1 12l13 -13" stroke="#bcbc10" strokeWidth="1.200" />
      </pattern>
      <pattern id="dash" width="10.500" height="10" patternUnits="userSpaceOnUse">
        <path d="M-1 11l12 -12" stroke="#c8c800" strokeWidth="1.800" />
      </pattern>
      <pattern id="red" width="5" height="5" patternUnits="userSpaceOnUse">
        <path d="M-1 6l7 -7" stroke="#d80000" strokeWidth="1.200" />
      </pattern>
      <pattern id="weave" width="8" height="13" patternUnits="userSpaceOnUse">
        <path d="M0 1h8M0 5h8M0 10h8" stroke="#0000f0" strokeWidth="2.200" />
      </pattern>
    </defs>

    <rect x="62.500" y="564.500" width="412" height="412" fill="url(#mem)" stroke="#e3a5da" />
    <text x="65" y="592.500" fontSize="24" textLength="98" fill="#fff">TU=1.2%</text>
    <text x="65" y="974" fontSize="24" textLength="130" fill="#fff">u_fifo_mem</text>

    {/* filler cells behind the pads */}
    <g fill="url(#dots)">
      <rect x="574" y="217" width="562" height="99" />
      <rect x="574" y="878" width="562" height="98" />
      <rect x="474" y="316" width="98" height="562" />
      <rect x="1136" y="316" width="98" height="562" />
    </g>
    <path d="M574 216.500h562M574 316h562M574 878h562M574 976.500h562M474.500 316v562M572 316v562M1136 316v562M1233.500 316v562" stroke={GR} fill="none" />
    {Array.from({ length: 13 }, (_, i) => {
      const y = 319 + i * 45;
      const x = 585 + i * 45;
      return (
        <g key={i}>
          <rect x="475" y={y} width="96" height="9" fill="#000" />
          <rect x="1137" y={y} width="96" height="9" fill="#000" />
          <path d={`M475 ${y + 0.5}h96M475 ${y + 3.5}h96M475 ${y + 8.5}h96M1137 ${y + 0.5}h96M1137 ${y + 3.5}h96M1137 ${y + 8.5}h96`} stroke="#777" />
          <rect x={x} y="217" width="6" height="98" fill="#000" />
          <path d={`M${x - 0.5} 217v98M${x + 2.5} 217v98M${x + 5.5} 217v98`} stroke="#777" />
        </g>
      );
    })}
    {Array.from({ length: 11 }, (_, i) => {
      const x = 584.5 + i * 52.7;
      return (
        <g key={i}>
          <rect x={x + 8} y="879" width="4" height="97" fill="#000" />
          <path d={`M${x} 878v98M${x + 8} 878v98M${x + 11.5} 878v98`} stroke="#808080" />
        </g>
      );
    })}

    {/* corners and pads */}
    {[[474.5, 217, "corner_4"], [1136.5, 217, "corner_3"], [474.5, 878.5, "corner_1"], [1136.5, 878.5, "corner_2"]].map(([x, y, t]) => (
      <g key={t as string}>
        <rect x={x} y={y} width="96.500" height="98" fill="#000" />
        <rect x={x} y={y} width="96.500" height="98" fill="url(#dots)" stroke={GR} strokeWidth="3.300" />
        <PadName t={t as string} x={(x as number) + 1.5} y={(y as number) + 95.5} w={61} />
      </g>
    ))}
    <path d="M560 219l10 20M1214 313l18-10M476 890l18-10M1138 956l6 14" stroke={GR} />
    {topPads.map((t, i) => {
      const x = 592.5 + i * 45;
      return (
        <g key={i}>
          <rect x={x} y="217" width="23.500" height="98" fill="#000" />
          <rect x={x} y="217" width="23.500" height="98" fill="url(#dots)" stroke={GR} strokeWidth="3.800" />
          <path d={`M${x + 19} 219l4 8M${x + 30} 219l5 7`} stroke={GR} />
          <PadName t={t} x={x + 19.5} y={314} w={nameWidth(t)} up />
          {t.startsWith("pc3d") && <path d={`M${x + 10} 300h8l-4 17z`} fill="#f2d21c" />}
        </g>
      );
    })}
    {bottomPads.map((t, i) => {
      const x = 600 + i * 52.7;
      return (
        <g key={i}>
          <rect x={x} y="878.500" width="23.500" height="98" fill="#000" />
          <rect x={x} y="878.500" width="23.500" height="98" fill="url(#dots)" stroke={GR} strokeWidth="3.800" />
          <path d={`M${x + 2} 966l4 8`} stroke={GR} />
          <PadName t={t} x={x + 20} y={973.5} w={nameWidth(t)} up />
          {t.startsWith("pc3d") && <path d={`M${x + 5.5} 893h8l-4-15z`} fill="#f2d21c" />}
          {t.startsWith("pc3o") && <path d={`M${x + 5.5} 879h8l-4 16z`} fill="#f2d21c" />}
        </g>
      );
    })}
    {leftPads.map((t, i) => {
      const y = 339.5 + i * 45;
      return (
        <g key={i}>
          <rect x="475" y={y} width="96.500" height="23.500" fill="#000" />
          <rect x="475" y={y} width="96.500" height="23.500" fill="url(#dots)" stroke={GR} strokeWidth="3.800" />
          <PadName t={t} x={476} y={y + 21} w={nameWidth(t)} />
          {i > 3 && <path d={`M556 ${y + 5}l6 2h4v1.500h6v2h-6v1.500l-10 2z`} fill="#f2d21c" />}
        </g>
      );
    })}
    {rightPads.map((t, i) => {
      const y = 339.5 + i * 45;
      return (
        <g key={i}>
          <rect x="1136" y={y} width="97" height="23.500" fill="#000" />
          <rect x="1136" y={y} width="97" height="23.500" fill="url(#dots)" stroke={GR} strokeWidth="3.800" />
          <PadName t={t} x={1137.5} y={y + 21} w={t.startsWith("pc") ? 65 : nameWidth(t)} />
          {i > 3 && <path d={`M1135 ${y + 10}l14 3.500-14 3.500z`} fill="#f2d21c" />}
        </g>
      );
    })}
    <path d="M604.500 313v3M611.500 313v3M604 878v3M611.500 878v3" stroke="#f2d21c" />

    {/* core rows */}
    <rect x="584" y="366" width="539" height="464" fill="url(#weave)" />
    <rect x="608" y="365" width="491" height="464" fill="#0000ff" />
    <path d="M608 364.500h491" stroke="#000" />
    <path d="M620 364.500h467" stroke="#9a9aa8" />
    {straps.map((y, i) => (
      <path key={y} d={`M608 ${y - 17.5}h491M608 ${y - 8.5}h491M608 ${y - 1.5}h491${i % 3 === 2 ? `M608 ${y - 19.5}h491M608 ${y - 10.5}h491` : ""}`} stroke="#00005a" />
    ))}
    <path d="M620.500 366v460M1086.500 366v460" stroke="#a0a0ff" strokeDasharray="1 8" />

    {/* power rings */}
    <g fill="url(#grn)" stroke="#00a40a">
      <rect x="595" y="327.500" width="517" height="11" />
      <rect x="608.500" y="341.500" width="490.500" height="11" />
      <rect x="608.500" y="841.500" width="490.500" height="11" />
      <rect x="595" y="855.500" width="517" height="10" />
    </g>
    {straps.map((y) => <Strap key={y} y={y} />)}
    <g fill="url(#yel)" stroke={OL} strokeWidth="1.400">
      <rect x="584.500" y="328" width="10.500" height="538" />
      <rect x="598" y="341.500" width="10.500" height="511" />
      <rect x="1099" y="341.500" width="10.500" height="511" />
      <rect x="1112.500" y="328" width="10.500" height="538" />
    </g>
    <g fill="url(#grn)" stroke="#00a80c">
      <rect x="572" y="434.500" width="12" height="14" />
      <rect x="572" y="479.500" width="26" height="14" />
      <rect x="1123" y="434.500" width="12" height="14" />
      <rect x="1110" y="479.500" width="25" height="14" />
    </g>
    <g fill={YE}>
      <rect x="584" y="327.500" width="11" height="11" /><rect x="1112" y="327.500" width="11.500" height="11" />
      <rect x="597.500" y="341.500" width="11" height="11" /><rect x="1098.500" y="341.500" width="11" height="11" />
      <rect x="584" y="855" width="11" height="11" /><rect x="1112" y="855" width="11.500" height="11" />
      <rect x="597.500" y="841.500" width="11" height="11" /><rect x="1098.500" y="841.500" width="11" height="11" />
      <rect x="584" y="434" width="11" height="15" /><rect x="1112" y="434" width="11.500" height="15" />
      <rect x="597.500" y="479" width="11" height="15" /><rect x="1098.500" y="479" width="11" height="15" />
    </g>
    {[[688, 0], [733, 1], [913, 0], [958, 1]].map(([x, s]) => (
      <g key={x}>
        <rect x={x} y="314.500" width="13" height={s ? 13 : 27} fill="url(#red)" stroke="#e00000" />
        <rect x={x - 0.5} y={s ? 328 : 342} width="14" height="10.500" fill="#00d200" />
      </g>
    ))}
    <rect x="710.500" y="852" width="14" height="27.500" fill="url(#red)" stroke="#e00000" />
    <rect x="710" y="841.500" width="15" height="11" fill="#00d200" />
    <rect x="764.500" y="866" width="13" height="13.500" fill="url(#red)" stroke="#e00000" />
    <rect x="764" y="855.500" width="14" height="11" fill="#00d200" />

    {/* palette button and expand arrow */}
    <rect x="1624" y="179" width="28" height="31" fill="#ececec" />
    <rect x="1628" y="182.500" width="8" height="8" fill="#c4504e" /><rect x="1640.500" y="182.500" width="8" height="8" fill="#2f9a35" />
    <rect x="1628" y="195" width="8" height="8" fill="#e09a3c" /><rect x="1640.500" y="195" width="8" height="8" fill="#5873ab" />
    <path d="M1635 996h14l-4 4 5 6-5 5-6-6-4 4z" fill="#87d41e" />
  </svg>
);

/* ---------- tree ---------- */

const Cell = ({ k }: { k: string }) => (
  <svg width="25" height="22" viewBox="0 0 25 22">
    {(k === "v" || k === "t") && <path d="M12.500 0v22" stroke="#444" strokeDasharray="1 1" />}
    {k === "l" && <path d="M12.500 0v11" stroke="#444" strokeDasharray="1 1" />}
    {(k === "t" || k === "l") && <path d="M13 10.500h11" stroke="#444" strokeDasharray="1 1" />}
    {(k === "+" || k === "-" || k === "-0" || k === "+e") && (
      <g>
        <path d={k === "-0" ? "M12.500 16v6" : k === "+e" ? "M12.500 0v6" : "M12.500 0v22"} stroke="#444" strokeDasharray="1 1" />
        <path d="M18 10.500h7" stroke="#444" strokeDasharray="1 1" />
        <rect x="7.500" y="5.500" width="10" height="10" fill="#fff" stroke="#444" />
        <path d={k[0] === "+" ? "M9.500 10.500h6M12.500 7.500v6" : "M9.500 10.500h6"} stroke="#000" strokeWidth="1.300" />
      </g>
    )}
  </svg>
);

const Check = ({ k, gap }: { k: string; gap?: number }) =>
  k === " " ? <NoBox /> : (
    <CheckBox $gap={gap}>
      <svg width="13" height="13" viewBox="0 0 13 13">
        {(k === "c" || k === "g") && <path d="M2 5l3 6 7-9-6 5.500z" fill={k === "c" ? "#d00000" : "#a86a6a"} stroke={k === "c" ? "#d00000" : "#a86a6a"} strokeWidth="1.200" />}
        {k === "s" && <rect x="3.500" y="3.500" width="6" height="5.500" fill="#d00000" />}
      </svg>
    </CheckBox>
  );

const dotSwatch = (c: string) => {
  const dot = `conic-gradient(from 270deg at 1px 1px, ${c} 90deg, transparent 0)`;
  return `${dot} 0 0 / 4px 4px, ${dot} 2px 2px / 4px 4px, #fff`;
};
const hatch = (deg: number, c: string, gap: number) => `repeating-linear-gradient(${deg}deg, #fff 0 ${gap - 1}px, ${c} ${gap - 1}px ${gap}px)`;
const chk = "repeating-conic-gradient(#888 0 25%, #ddd 0 50%) 0 0 / 2px 2px";

type Node = { t: string; cells: string[]; c: string; bold?: boolean; radio?: "on" | "off" | "faint"; sw?: [string, string] };
const leaf = (t: string, sw: [string, string], last = false): Node => ({ t, cells: ["v", "v", last ? "l" : "t"], c: "cc", radio: "faint", sw });
const layer = (t: string, sw: [string, string], last = false): Node => ({ t, cells: ["v", last ? "l" : "t"], c: "cc", radio: "faint", sw });
const top = (t: string, c: string): Node => ({ t, cells: ["+"], c, bold: true });

const nodes: Node[] = [
  { t: "Instance", cells: ["-0"], c: "cc", bold: true },
  { t: "Type", cells: ["v", "-"], c: "cc", radio: "on" },
  leaf("Block", ["#888", chk]),
  leaf("StdCell", ["#888", dotSwatch("#888")]),
  leaf("Cover", ["#888", dotSwatch("#888")]),
  leaf("Physical", ["#888", dotSwatch("#888")]),
  leaf("IO", ["#888", dotSwatch("#888")]),
  leaf("Area IO", ["#888", dotSwatch("#888")]),
  leaf("Black Box", ["#5d6161", "#5d6161"], true),
  { t: "Function", cells: ["v", "+"], c: "cc", radio: "off" },
  { t: "Status", cells: ["v", "+e"], c: "cc", radio: "off" },
  top("Module", "cc"),
  top("Cell", "ss"),
  top("Blockage", "sc"),
  top("Row", "se"),
  top("Floorplan", "sc"),
  top("Partition", "cc"),
  top("Power", "ss"),
  top("Overlay", "eg"),
  top("Track", "e "),
  top("Net", "cc"),
  top("Route", "cc"),
  { t: "Layer", cells: ["-"], c: "cc", bold: true },
  layer("GC(0)", ["#f5a05a", hatch(135, "#f8b27a", 4)]),
  layer("M1(1)", ["#0000e0", hatch(45, "#2222ff", 3)]),
  layer("V2(1)", ["#f00000", dotSwatch("#f00")]),
  layer("M2(2)", ["#f00000", hatch(135, "#ff3030", 3)]),
  layer("V3(2)", ["#00c800", dotSwatch("#00cc00")]),
  layer("M3(3)", ["#00c800", hatch(45, "#00b800", 7)]),
  layer("TOP_V(3)", ["#cfcf00", dotSwatch("#d0d000")]),
  layer("TOP_M(4)", ["#cfcf00", hatch(135, "#d0d000", 7)], true),
];

const TreeRow = ({ n }: { n: Node }) => (
  <Row>
    {n.cells.map((k, i) => <Cell key={i} k={k} />)}
    {n.radio && (
      <Slot $w={n.radio === "faint" ? 17 : 20}><Radio $size={n.radio === "faint" ? 12 : 14} $kind={n.radio} /></Slot>
    )}
    <RowName $bold={n.bold} $pad={n.radio === "faint" ? 0 : n.radio ? 1 : 2}>{n.t}</RowName>
    {n.sw && <Swatch $line={n.sw[0]} $fill={n.sw[1]} />}
    <Check k={n.c[0]} gap={1} />
    <Check k={n.c[1]} gap={5} />
  </Row>
);

const menus: [string, string, string, number][] = [
  ["", "F", "ile", 39], ["", "V", "iew", 50], ["", "E", "dit", 42.5], ["Partitio", "n", "", 75], ["Floorpl", "a", "n", 82],
  ["Po", "w", "er", 59], ["", "P", "lace", 53], ["EC", "O", "", 45], ["", "C", "lock", 54], ["", "R", "oute", 56],
  ["", "T", "iming", 63], ["Verif", "y", "", 55], ["Pegasus", "", "", 73], ["Too", "l", "s", 52.5], ["W", "i", "ndows", 80],
  ["Flow", "s", "", 54.5], ["", "H", "elp", 60],
];

export default function App() {
  return (
    <Window>
      <Global />
      <TitleBar>
        <svg width="19" height="21" viewBox="0 0 19 21">
          <path d="M13 1h6l-7 10h-4z" fill="#1e6fe0" /><path d="M0 20h5l5-8-2-3z" fill="#79d41c" /><path d="M13 10l6 10h-4l-4-7z" fill="#e01b1b" /><path d="M0 1h6l12 19h-6z" fill="#111" />
        </svg>
        <TitleText>Innovus(TM) Implementation System 21.18 - /run/media/user1/c2s/rtl_to_gds/Karthik/08_Async_FIFO_Post_Synthesis_LEC/floorplan/fifo_fp_filler.enc.dat - fifo — c2slab.cet.ac.in</TitleText>
        <WindowControls>
          <svg width="14" height="14" viewBox="0 0 14 14"><path d="M1 6.500h12" stroke="#111" /></svg>
          <svg width="14" height="14" viewBox="0 0 14 14" fill="none" stroke="#111" strokeWidth="1.200"><rect x="1.500" y="4" width="9" height="9" rx="2" /><path d="M4 2h6q3 0 3 3v6" /></svg>
          <svg width="14" height="14" viewBox="0 0 14 14"><path d="M1 1l12 12M13 1L1 13" stroke="#111" strokeWidth="1.200" /></svg>
        </WindowControls>
      </TitleBar>
      <MenuBar>
        {menus.map(([a, u, b, w]) => (
          <MenuItem key={a + u + b} $w={w} $off={a === "Pegasus"}>{a}<u>{u}</u>{b}</MenuItem>
        ))}
        <HelpBox>
          <svg width="16" height="17" viewBox="0 0 16 17"><circle cx="7" cy="6.500" r="5" fill="#eef2f8" stroke="#a87c5c" strokeWidth="1.600" /><path d="M10.500 10.500l4 5" stroke="#4a5e9c" strokeWidth="3" /></svg>
          <span>online help</span>
        </HelpBox>
        <Logo>
          <svg width="96" height="28" viewBox="0 1 96 28">
            <text x="0" y="23.500" fontFamily="Open Sans, Noto Sans, sans-serif" fontWeight="700" fontSize="21" fill="#333" transform="scale(.8 1)" textLength="112">cadence</text>
            <path d="M14 7h7" stroke="#e0323a" strokeWidth="2" />
          </svg>
        </Logo>
      </MenuBar>
      <RedRule />
      <TabRow>
        <Tab><u>L</u>ayout</Tab>
        <AddTab><svg width="18" height="18" viewBox="0 0 18 18"><circle cx="9" cy="9" r="8.500" fill="#bd4a4d" /><path d="M9 4.500v9M4.500 9h9" stroke="#fff" strokeWidth="2" /></svg></AddTab>
      </TabRow>

      <ToolBar>
        <ToolGroup $w={164}><Grip $gap={-2} /><Tools items={["folder", "save", "gear", "listMag"]} /></ToolGroup>
        <ToolGroup $w={272}><Grip /><Tools items={["undo", "redo", "|", "curBrush", "v", "xBrush", "v", "xxBrush", "curXBrush"]} /></ToolGroup>
        <ToolGroup $w={438}><Grip $gap={-3} /><Tools items={["zoomArea", "v", "zoomIn", "zoomOut", "zoomFit", "zoomPrev", "v", "zoomNext", "refresh", "refreshMap", "v"]} drop={12.6} /><Divider $l={4} $r={3} /><Slot $w={38}><Icon n="pushDown" /></Slot><Slot $w={35}><Icon n="pushUp" /></Slot></ToolGroup>
        <ToolGroup $w={282}><Grip $gap={-1} /><Tools items={["layout", "tree", "warn", "info", "xxCursor", "rulerDel", "warnBrush"]} /></ToolGroup>
        <ToolGroup><Grip $gap={-1} /><Tools items={["note", "pad", "percent"]} /></ToolGroup>
      </ToolBar>
      <ToolBar>
        <ToolGroup>
          <Grip />
          <Pressed $w={35}><Icon n="select" s={29} /></Pressed>
          <Pressed $w={12} $gap={0}><Down /></Pressed>
          <Tools items={["snow", "v", "copy", "ruler", "v"]} drop={12.6} />
          <Tools items={["vMap", "pctPage", "cutBlue", "tilesBan", "tilesBan", "nodesBan", "gridPlus", "gridBan", "gridRed", "wire", "pickRed", "lshape", "v", "cut", "v", "stretch", "v", "addPoly", "wireCur", "moveCur"]} drop={13} />
          <Push>
            <Divider /><Pressed $w={36} $gap={1}><Icon n="floorView" /></Pressed>
            <Tools items={["amoeba", "physView"]} /><Divider $l={2} $r={1} />
            <Slot $w={40}><Icon n="glasses" s={29} /></Slot><Slot $w={11}><Down /></Slot>
          </Push>
        </ToolGroup>
      </ToolBar>

      <Body>
        <SideBar>
          <SideGrip />
          <SideItem $drop><NetStack><SideWord $size={16} $color="#000">Net</SideWord><svg width="28" height="7" viewBox="0 0 28 7"><path d="M3 3.500h22" stroke="#c13a3a" strokeWidth="1.300" /><path d="M0 3.500l5-2.500v5zM28 3.500l-5-2.500v5z" fill="#c13a3a" /></svg></NetStack><Down /></SideItem>
          <SideItem $drop><Slot $w={33}><Icon n="layers" s={24} /></Slot><Down /></SideItem>
          <SideItem $drop><Slot $w={33}><Icon n="squeeze" s={24} /></Slot><svg width="9" height="2" viewBox="0 0 9 2"><path d="M0 1h9" stroke="#888" strokeWidth="1.500" /></svg></SideItem>
          {["compass", "bars", "mergeDn", "mergeUp", "cross", "wireDel"].map((n) => <SideItem key={n}><Slot $w={33}><Icon n={n} s={26} /></Slot></SideItem>)}
          <SideItem $drop><SideWord $size={12} $color="#263a2a">Snap</SideWord><Down /></SideItem>
          {["flip", "align"].map((n) => <SideItem key={n}><Slot $w={33}><Icon n={n} s={26} /></Slot></SideItem>)}
          <SideItem $drop><Slot $w={33}><Icon n="line" s={28} /></Slot><Down /></SideItem>
          <SideItem><SideWord $size={31} $color="#3a3a3a">A</SideWord></SideItem>
        </SideBar>
        <Canvas><Chip /></Canvas>
        <Splitter />
        <Panel>
          <Pill $w={96} $h={27}>All Colors</Pill>
          <TreeFrame>
            <TreeBody>
              <TreeHead><HeadDot>V</HeadDot><HeadDot>S</HeadDot></TreeHead>
              <Favorites>
                <Row $h={23}><Cell k="-0" /><RowName $bold $pad={2}>Favorite</RowName></Row>
                <Row $h={18}><Cell k="" /><Cell k="l" /><Slot $w={14}><Radio $size={12} $kind="pink" /></Slot><RowName $pad={2}>Violation</RowName><Swatch $line="#fff" $fill="#fff" /><Check k="c" gap={1} /><Check k="c" gap={5} /></Row>
              </Favorites>
              {nodes.map((n) => <TreeRow key={n.t} n={n} />)}
            </TreeBody>
            <ScrollBar>
              <ScrollButton><svg width="12" height="10" viewBox="0 0 12 10"><path d="M6 1l5 8H1z" fill="#eee" stroke="#aaa" /></svg></ScrollButton>
              <ScrollThumb><ThumbGrip /></ScrollThumb>
              <ScrollButton><svg width="12" height="10" viewBox="0 0 12 10"><path d="M6 9L1 1h10z" fill="#eee" stroke="#aaa" /></svg></ScrollButton>
            </ScrollBar>
          </TreeFrame>
          <OptionRow $h={35}><Radio $size={14} $kind="on" />Adaptive</OptionRow>
          <OptionRow $h={39}>
            <Radio $size={14} $kind="off" />Detail
            <svg width="125" height="36" viewBox="0 0 125 36">
              <path d="M10 18h110" stroke="#cfcfcf" strokeWidth="1.500" /><path d="M42.500 27v7M66.500 27v7M89.500 27v7" stroke="#a9a9a9" />
              <rect x="13.500" y="8.500" width="10" height="17" rx="2" fill="#e8e8e8" stroke="#bbb" /><path d="M18.500 13v7" stroke="#c81010" strokeWidth="1.600" />
            </svg>
            <Muted>Speed</Muted>
          </OptionRow>
        </Panel>
      </Body>

      <QueryBar>
        <Grip $gap={-1} />
        <Pill $w={123} $h={28}><PillText $w={102}>select</PillText><RightTri /></Pill>
        <Slot $w={2} />
        <Pill $w={123} $h={28}><PillText $w={102}>Instance</PillText><RightTri /></Pill>
        <Slot $w={2} />
        <Field $w={1168} $hint>Enter Instance name.</Field>
        <Slot $w={3} />
        <Check k="c" />
        <Label $w={140} $pad={6}>Append</Label>
        <Label $w={63} $pad={6}>coords</Label>
        <Field $w={93}>0, 0</Field>
        <Label $w={62} $pad={8}>radius</Label>
        <Field $w={49}>150</Field>
        <Slot $w={1} />
        <Pill $w={59} $h={28}>Goto</Pill>
      </QueryBar>
      <StatusBar>
        <StatusButton>Q</StatusButton>
        <StatusButton>
          <svg width="24" height="24" viewBox="0 0 24 24"><path d="M3 2h5v5H3z" fill="none" stroke="#d04b4b" strokeWidth="2" /><path d="M2 9h7v6H2z" fill="#5873ab" /><path d="M3 17h5v5H3z" fill="none" stroke="#e99a4c" strokeWidth="2" /><circle cx="16" cy="11" r="6.500" fill="#f2f4f8" stroke="#6d7fa8" strokeWidth="2" /><path d="M16 7v4h4" stroke="#333" strokeWidth="1.500" fill="none" /><path d="M15 18h8l-4 5z" fill="#000" /></svg>
        </StatusButton>
        <Message>Click to select single object. Shift+Click to de/select multiple objects.</Message>
        <Readout>2424.94500, 372.57700 <Tint $c="#6b93d6">Sel: 0</Tint> <Tint $c="#4cc3cf">Placed</Tint></Readout>
      </StatusBar>
    </Window>
  );
}
